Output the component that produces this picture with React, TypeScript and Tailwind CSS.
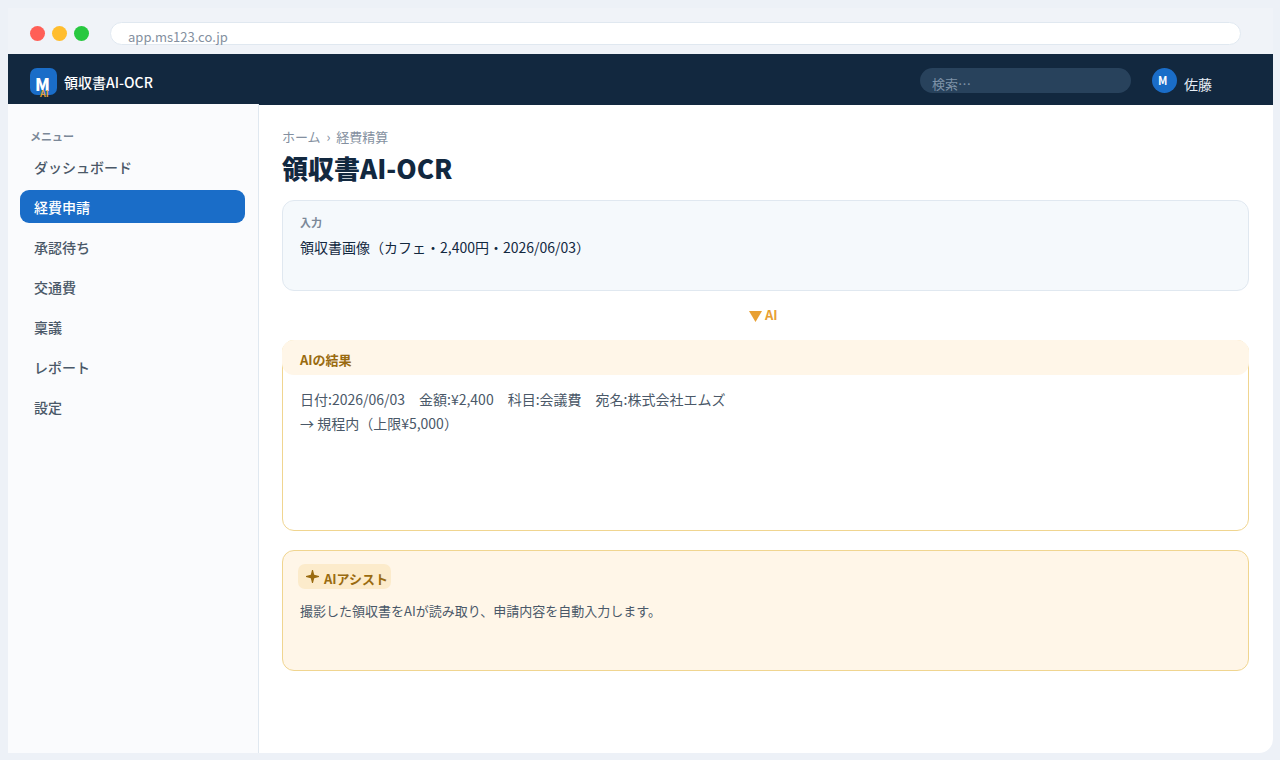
const menu = ["ダッシュボード", "経費申請", "承認待ち", "交通費", "稟議", "レポート", "設定"];
const active = 1;

function TitleBar() {
  return (
    <div className="flex h-[46px] items-start bg-[#f0f3f8] pl-[22px] pt-[14px]">
      <div className="flex gap-[7px] pt-1">
        <span className="size-[15px] rounded-full bg-[#ff5f57]" />
        <span className="size-[15px] rounded-full bg-[#ffbd2e]" />
        <span className="size-[15px] rounded-full bg-[#28c840]" />
      </div>
      <div className="ml-[21px] h-[23px] w-[1131px] rounded-full border border-[#e0e8f0] bg-white pl-[17px] pt-[4px] text-[13px] leading-5 text-[#8490a0]">
        app.ms123.co.jp
      </div>
    </div>
  );
}

function NavBar() {
  return (
    <header className="flex h-[51px] items-start bg-[#12283f] pl-[22px] pt-[14px] text-white">
      <div className="relative size-[27px] rounded-[7px] bg-[#1a6dc8]">
        <span className="absolute left-[5px] top-[6px] text-[17px] font-black leading-5">M</span>
        <span className="absolute left-[10px] top-[20px] text-[9px] font-bold leading-3 text-[#e8a033]">AI</span>
      </div>
      <span className="ml-[7px] mt-[4px] text-[14px] font-medium leading-5">領収書AI-OCR</span>
      <div className="ml-auto h-[25px] w-[211px] rounded-full bg-[#28425c] pl-3 pt-[6px] text-[13px] leading-5 text-[#7f93a8]">
        検索…
      </div>
      <div className="ml-[21px] size-[25px] rounded-full bg-[#1a6dc8] pl-[6px] pt-[2px] text-[11px] font-bold leading-5">M</div>
      <span className="ml-[7px] mr-[61px] mt-[6px] text-[14px] leading-5 text-[#e6edf5]">佐藤</span>
    </header>
  );
}

function Sidebar() {
  return (
    <nav className="-mt-px w-[251px] shrink-0 border-r border-[#e0e8f0] bg-[#fafbfd] px-3 pt-[22px] font-medium">
      <h2 className="pl-[10px] text-[11px] font-bold leading-5 text-[#7b8898]">メニュー</h2>
      <ul className="mt-1 flex flex-col gap-[7px]">
        {menu.map((label, i) => (
          <li
            key={label}
            className={
              i === active
                ? "h-[33px] w-[225px] rounded-[9px] bg-[#1a6dc8] pl-[14px] pt-[7px] text-[14px] leading-5 text-white"
                : "h-[33px] w-[225px] pl-[14px] pt-[7px] text-[14px] leading-5 text-[#4a5868]"
            }
          >
            {label}
          </li>
        ))}
      </ul>
    </nav>
  );
}

function Main() {
  return (
    <main className="flex-1 pl-[23px] pr-6 pt-[22px]">
      <div className="text-[13px] leading-5 text-[#8490a0]">ホーム&nbsp; ›&nbsp; 経費精算</div>
      <h1 className="mt-[5px] text-[26px] font-black leading-8 text-[#12283f]">領収書AI-OCR</h1>

      <section className="mt-[16px] h-[91px] rounded-[12px] border border-[#e0e8f0] bg-[#f5f9fc] px-[17px] pt-[11px]">
        <h2 className="text-[11px] font-bold leading-5 text-[#7b8898]">入力</h2>
        <p className="mt-[5px] text-[14px] leading-5 text-[#12283f]">領収書画像（カフェ・2,400円・2026/06/03）</p>
      </section>

      <div className="flex h-[49px] items-start pl-[467px] pt-[14px] text-[13px] font-bold leading-5 text-[#e8a033]">
        <svg className="mt-[6px]" width="13" height="11" viewBox="0 0 13 11" fill="currentColor">
          <path d="M0 0h13L6.500 11z" />
        </svg>
        <span className="ml-[3px]">AI</span>
      </div>

      <section className="h-[191px] rounded-[12px] border border-[#f0d590] text-[#4a5868]">
        <h2 className="-mx-px -mt-px h-[35px] rounded-[12px] bg-[#fff6e8] pl-[18px] pt-[10px] text-[13px] font-bold leading-5 text-[#9a6b10]">
          AIの結果
        </h2>
        <p className="whitespace-pre pl-[17px] pt-[12px] text-[14px] leading-6">
          {"日付:2026/06/03　金額:¥2,400　科目:会議費　宛名:株式会社エムズ\n→ 規程内（上限¥5,000）"}
        </p>
      </section>

      <section className="mt-[19px] h-[121px] rounded-[12px] border border-[#f0d590] bg-[#fff6e8] pl-[15px] pt-[13px]">
        <div className="flex h-[25px] w-[93px] items-start rounded-[7px] bg-[#fcebcb] pl-2 pt-[5px] text-[13px] font-bold leading-5 text-[#9a6b10]">
          <svg className="mt-[1px] shrink-0" width="13" height="13" viewBox="0 0 13 13" fill="currentColor">
            <path d="M6 0h1l1.200 4.800L13 6v1L8.200 8.200 7 13H6L4.800 8.200 0 7V6l4.800-1.200z" />
          </svg>
          <span className="ml-[5px] whitespace-nowrap">AIアシスト</span>
        </div>
        <p className="mt-3 pl-[2px] text-[13px] leading-5 text-[#4a5868]">
          撮影した領収書をAIが読み取り、申請内容を自動入力します。
        </p>
      </section>
    </main>
  );
}

export default function App() {
  return (
    <div lang="ja" className="h-[760px] w-[1280px] overflow-hidden bg-[#edf1f7] pl-2 pt-2 font-['Noto_Sans_CJK_JP',sans-serif]">
      <div className="flex h-[745px] w-[1265px] flex-col overflow-hidden rounded-br-[14px] bg-white">
        <TitleBar />
        <NavBar />
        <div className="flex min-h-0 flex-1">
          <Sidebar />
          <Main />
        </div>
      </div>
    </div>
  );
}
